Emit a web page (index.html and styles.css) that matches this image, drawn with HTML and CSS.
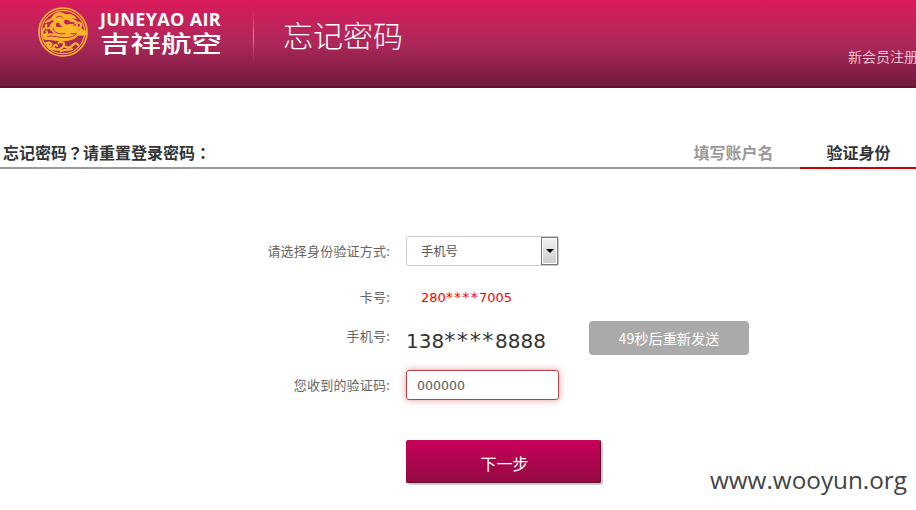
FILE: index.html
```html
<!DOCTYPE html>
<html lang="zh-CN">
<head>
<meta charset="utf-8">
<title>忘记密码</title>
<link rel="stylesheet" href="styles.css">
</head>
<body>
<header class="header">
  <div class="brand">
    <svg class="emblem" viewBox="0 0 150 150" fill="none" stroke="#fdb52b" stroke-linecap="round" stroke-linejoin="round">
      <circle cx="75" cy="75" r="72" stroke-width="5"/>
      <circle cx="75" cy="75" r="65" stroke-width="3.5"/>
      <path fill="#fdb52b" stroke-width="3" d="M22 47c4-8 12-8 18-12 4-10 13-18 25-18 10 0 14 6 22 6 10-2 22 2 28 12-6-3-12-3-15 2 8-1 15 4 17 10-9-4-16-2-22-6-9-6-16-6-18 1-1 6 2 10 9 12l20-2c-4 7-16 11-27 8-9-2-14-7-14-14-8-2-13 2-13 8 0 7 7 9 14 8 11 0 20-6 33-7 13 1 21 8 21 16h20c9 3 7 12-2 13h-18c-8 12-24 17-52 17-18 0-28-5-48-4-4-3-6-8-4-13 16-3 31-5 48-2-15-3-26-9-28-19-1-9 5-16 13-19-5-4-6-8-3-12-5 8-13 13-24 14z"/>
      <path stroke="#c02658" stroke-width="3" d="M55 31c8-6 15-4 19 2M45 64c3 15 20 18 36 16M28 88c20-4 34 5 57 4 15-1 24-5 31-12H99"/>
      <path stroke-width="6.5" d="M19 65c-7 5-9 15-2 18s13-5 8-10M25 54c-5 6 0 12 8 9M112 49c12-7 21 3 16 10s-15 1-11-5M120 64c9 0 15 6 11 10M22 110c10-6 20-2 18 4s-13 4-10-2M62 107c8-5 18-1 16 6-3 12-22 20-30 11-5-7 4-13 9-8M80 118c8 7 20 2 25-4 5-7 14-6 15 0M34 123c5 0 9 4 16 4M68 133c14-7 22-3 34-7"/>
    </svg>
    <div class="wordmark">
      <span class="name-en">JUNEYAO AIR</span>
      <span class="name-cn">吉祥航空</span>
    </div>
  </div>
  <span class="divider"></span>
  <h1 class="title">忘记密码</h1>
  <a class="register">新会员注册</a>
</header>
<section class="steps">
  <h2 class="prompt">忘记密码<span class="mark" lang="zh-TW">？</span>请重置登录密码<span class="mark" lang="zh-TW">：</span></h2>
  <div class="step">填写账户名</div>
  <div class="step active">验证身份</div>
</section>
<main class="form">
  <div class="row method">
    <label class="label">请选择身份验证方式:</label>
    <div class="select"><span class="value">手机号</span><span class="arrow"></span></div>
  </div>
  <div class="row card">
    <span class="label">卡号:</span>
    <span class="card-number">280<span class="stars">****</span>7005</span>
  </div>
  <div class="row phone">
    <span class="label">手机号:</span>
    <span class="phone-number">138<span class="stars">****</span>8888</span>
    <button class="resend">49秒后重新发送</button>
  </div>
  <div class="row code">
    <label class="label">您收到的验证码:</label>
    <div class="code-input">000000</div>
  </div>
  <button class="next">下一步</button>
</main>
<footer class="watermark">www.wooyun.org</footer>
</body>
</html>
```
FILE: styles.css
```css
* { box-sizing: border-box; }
body {
  margin: 0;
  width: 916px;
  height: 510px;
  overflow: hidden;
  background: #fff;
  font: 13px/20px "Noto Sans CJK SC", sans-serif;
  color: #666;
}
h1, h2 { margin: 0; }
button { border: 0; padding: 0; font-family: inherit; color: #fff; }
.header {
  display: flex;
  align-items: flex-start;
  height: 88px;
  padding-left: 38px;
  overflow: hidden;
  white-space: nowrap;
  background: linear-gradient(#da1b5b, #ad285a 50%, #751a3e 96%);
  border-bottom: 2px solid #650f30;
}
.brand { display: flex; width: 215px; padding-top: 7px; }
.emblem { width: 50px; height: 50px; flex: none; }
.wordmark { display: flex; flex-direction: column; margin-left: 12px; color: #fff; }
.name-en { font: bold 18px/25px "Open Sans", sans-serif; letter-spacing: .35px; }
.name-cn { font-size: 30.5px; line-height: 20px; font-weight: 500; transform: scaleY(.74); }
.divider { width: 1px; height: 50px; margin-top: 11px; background: linear-gradient(transparent, #cf8aa3 50%, transparent); }
.title { margin: 14px 0 0 29px; font-size: 30px; line-height: 40px; font-weight: 300; color: #fff; }
.register { margin: 46px -2px 0 auto; font-size: 14px; color: #f5bfd0; }
.steps { display: flex; height: 81px; align-items: flex-end; font-size: 16px; font-weight: bold; line-height: 22px; }
.prompt { flex: 1; height: 28px; padding-left: 3px; border-bottom: 2px solid #999; font-size: 16px; line-height: 22px; color: #333; }
.mark { font-family: "Noto Sans CJK TC", sans-serif; }
.step { width: 133px; height: 28px; text-align: center; color: #999; border-bottom: 2px solid #999; }
.step.active { width: 116px; padding-left: 1px; color: #333; border-color: #c00; }
.form { height: 341px; padding-top: 67px; }
.row { display: flex; }
.label { width: 390px; margin-right: 16px; text-align: right; letter-spacing: .2px; }
.method { height: 51px; }
.method .label { padding-top: 5px; }
.select { display: flex; width: 153px; height: 30px; padding-left: 14px; border: 1px solid #ccc; border-radius: 3px; font-size: 12.3px; line-height: 28px; color: #555; }
.value { flex: 1; }
.arrow { display: flex; align-items: center; justify-content: center; width: 17px; height: 28px; border: 1px solid #777; box-shadow: inset 0 0 0 1px #fff; background: linear-gradient(#f2f2f2, #ccc); }
.arrow::after { content: ""; border: 4px solid transparent; border-top-color: #000; border-bottom: 0; }
.card { height: 34px; }
.card-number { padding-left: 15px; font: 13px/21px "DejaVu Sans", sans-serif; color: #f00; }
.stars { line-height: 1; }
.card-number .stars { font-size: 14px; letter-spacing: 1.27px; }
.phone { height: 49px; }
.phone .label { padding-top: 5px; }
.phone-number { width: 183px; padding-top: 9px; font: 20px/22px "DejaVu Sans", sans-serif; color: #333; }
.phone-number .stars { font-size: 22px; letter-spacing: 1.72px; }
.resend { width: 160px; height: 34px; border-radius: 4px; background: #aaa; font-size: 14.2px; line-height: 32px; }
.code { height: 70px; }
.code .label { padding-top: 5px; }
.code-input { width: 153px; height: 30px; padding-left: 10px; border: 1px solid #b94044; border-radius: 3px; box-shadow: 0 0 7px rgba(205, 65, 65, .55); font: 12.6px/30px "DejaVu Sans", sans-serif; color: #555; }
.next { display: block; width: 195px; height: 43px; margin-left: 406px; padding-left: 2px; border-radius: 2px; background: linear-gradient(#c8005a, #930b43); box-shadow: inset -1px -1px #650b2e, 2px 2px #ccc; font-size: 16px; line-height: 46px; }
.watermark { position: absolute; right: 9px; bottom: 13px; font: 24.3px/34px "Open Sans", sans-serif; color: #444; }
```
